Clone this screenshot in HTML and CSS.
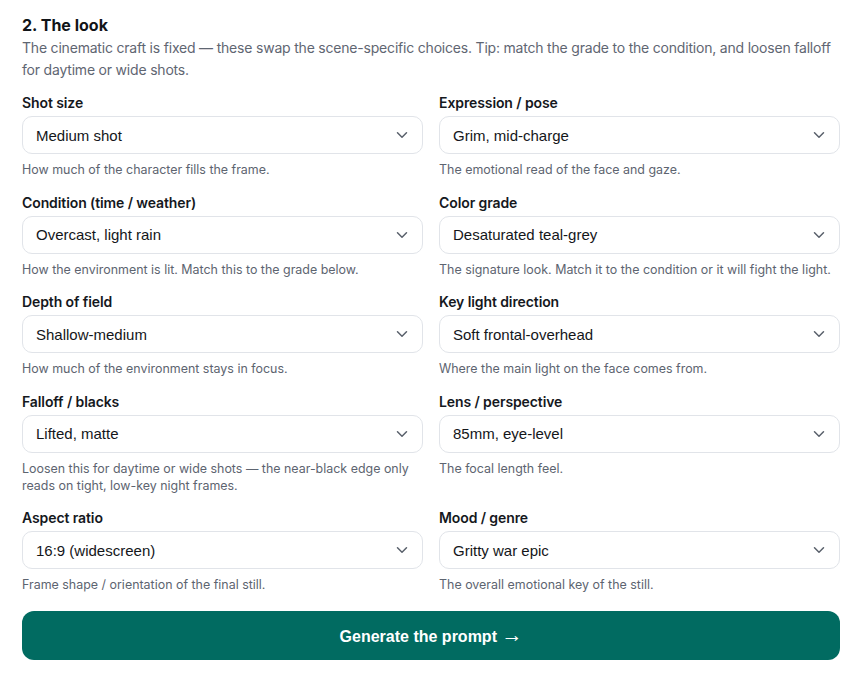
FILE: index.html
```html
<!DOCTYPE html>
<html lang="en">
<head>
<meta charset="utf-8">
<title>The look</title>
<link rel="stylesheet" href="styles.css">
</head>
<body>
<section class="panel">
  <h2 class="title">2. The look</h2>
  <p class="intro">The cinematic craft is fixed — these swap the scene-specific choices. Tip: match the grade to the condition, and loosen falloff for daytime or wide shots.</p>
  <div class="grid">
    <div class="field">
      <label class="label">Shot size</label>
      <div class="select-wrap"><select class="select"><option>Medium shot</option></select><svg class="chev" viewBox="0 0 12 8" width="12" height="8"><path d="M1.5 1.8 6 6.2l4.5-4.4"/></svg></div>
      <p class="help">How much of the character fills the frame.</p>
    </div>
    <div class="field">
      <label class="label">Expression / pose</label>
      <div class="select-wrap"><select class="select"><option>Grim, mid-charge</option></select><svg class="chev" viewBox="0 0 12 8" width="12" height="8"><path d="M1.5 1.8 6 6.2l4.5-4.4"/></svg></div>
      <p class="help">The emotional read of the face and gaze.</p>
    </div>
    <div class="field">
      <label class="label">Condition (time / weather)</label>
      <div class="select-wrap"><select class="select"><option>Overcast, light rain</option></select><svg class="chev" viewBox="0 0 12 8" width="12" height="8"><path d="M1.5 1.8 6 6.2l4.5-4.4"/></svg></div>
      <p class="help">How the environment is lit. Match this to the grade below.</p>
    </div>
    <div class="field">
      <label class="label">Color grade</label>
      <div class="select-wrap"><select class="select"><option>Desaturated teal-grey</option></select><svg class="chev" viewBox="0 0 12 8" width="12" height="8"><path d="M1.5 1.8 6 6.2l4.5-4.4"/></svg></div>
      <p class="help">The signature look. Match it to the condition or it will fight the light.</p>
    </div>
    <div class="field">
      <label class="label">Depth of field</label>
      <div class="select-wrap"><select class="select"><option>Shallow-medium</option></select><svg class="chev" viewBox="0 0 12 8" width="12" height="8"><path d="M1.5 1.8 6 6.2l4.5-4.4"/></svg></div>
      <p class="help">How much of the environment stays in focus.</p>
    </div>
    <div class="field">
      <label class="label">Key light direction</label>
      <div class="select-wrap"><select class="select"><option>Soft frontal-overhead</option></select><svg class="chev" viewBox="0 0 12 8" width="12" height="8"><path d="M1.5 1.8 6 6.2l4.5-4.4"/></svg></div>
      <p class="help">Where the main light on the face comes from.</p>
    </div>
    <div class="field">
      <label class="label">Falloff / blacks</label>
      <div class="select-wrap"><select class="select"><option>Lifted, matte</option></select><svg class="chev" viewBox="0 0 12 8" width="12" height="8"><path d="M1.5 1.8 6 6.2l4.5-4.4"/></svg></div>
      <p class="help">Loosen this for daytime or wide shots — the near-black edge only reads on tight, low-key night frames.</p>
    </div>
    <div class="field">
      <label class="label">Lens / perspective</label>
      <div class="select-wrap"><select class="select"><option>85mm, eye-level</option></select><svg class="chev" viewBox="0 0 12 8" width="12" height="8"><path d="M1.5 1.8 6 6.2l4.5-4.4"/></svg></div>
      <p class="help">The focal length feel.</p>
    </div>
    <div class="field">
      <label class="label">Aspect ratio</label>
      <div class="select-wrap"><select class="select"><option>16:9 (widescreen)</option></select><svg class="chev" viewBox="0 0 12 8" width="12" height="8"><path d="M1.5 1.8 6 6.2l4.5-4.4"/></svg></div>
      <p class="help">Frame shape / orientation of the final still.</p>
    </div>
    <div class="field">
      <label class="label">Mood / genre</label>
      <div class="select-wrap"><select class="select"><option>Gritty war epic</option></select><svg class="chev" viewBox="0 0 12 8" width="12" height="8"><path d="M1.5 1.8 6 6.2l4.5-4.4"/></svg></div>
      <p class="help">The overall emotional key of the still.</p>
    </div>
  </div>
  <button class="cta" type="button">Generate the prompt <span class="arrow">→</span></button>
</section>
</body>
</html>
```
FILE: styles.css
```css
* { box-sizing: border-box; }
html, body { margin: 0; background: #ffffff; }
body {
  font-family: Inter, "Noto Sans", sans-serif;
  color: #14161a;
}
.panel {
  padding: 14px 23px 0 22px;
}
.title {
  margin: 0;
  font-size: 16px;
  line-height: 22px;
  font-weight: 700;
  color: #111418;
}
.intro {
  margin: 1px 0 0;
  font-size: 14px;
  line-height: 22px;
  letter-spacing: -0.2px;
  color: #5f6672;
}
.grid {
  margin-top: 13px;
  display: grid;
  grid-template-columns: 1fr 1fr;
  column-gap: 16px;
  row-gap: 15.5px;
}
.field {
  display: flex;
  flex-direction: column;
}
.label {
  font-size: 14px;
  line-height: 18px;
  letter-spacing: -0.1px;
  font-weight: 600;
  color: #15181d;
}
.select-wrap {
  position: relative;
  margin-top: 4px;
}
.select {
  appearance: none;
  -webkit-appearance: none;
  width: 100%;
  height: 38px;
  border: 1px solid #e1e4e9;
  border-radius: 10px;
  background: #ffffff;
  padding: 0 36px 0 13px;
  font-family: "Liberation Sans", Arial, sans-serif;
  font-size: 15px;
  color: #14161a;
  outline: none;
}
.chev {
  position: absolute;
  right: 15px;
  top: 15px;
  fill: none;
  stroke: #59606b;
  stroke-width: 1.5;
  stroke-linecap: round;
  stroke-linejoin: round;
  pointer-events: none;
}
.help {
  margin: 7px 0 0;
  font-size: 12.45px;
  line-height: 17px;
  color: #5d6470;
}
.cta {
  display: block;
  width: 100%;
  margin-top: 18px;
  height: 49px;
  border: 0;
  border-radius: 12px;
  background: #016b61;
  color: #ffffff;
  font-family: "Liberation Sans", Arial, sans-serif;
  font-size: 16px;
  font-weight: 700;
  line-height: 20px;
  cursor: pointer;
}
.arrow {
  font-family: "Liberation Sans", Arial, sans-serif;
  font-weight: 400;
  font-size: 21px;
  line-height: 1;
}
```
